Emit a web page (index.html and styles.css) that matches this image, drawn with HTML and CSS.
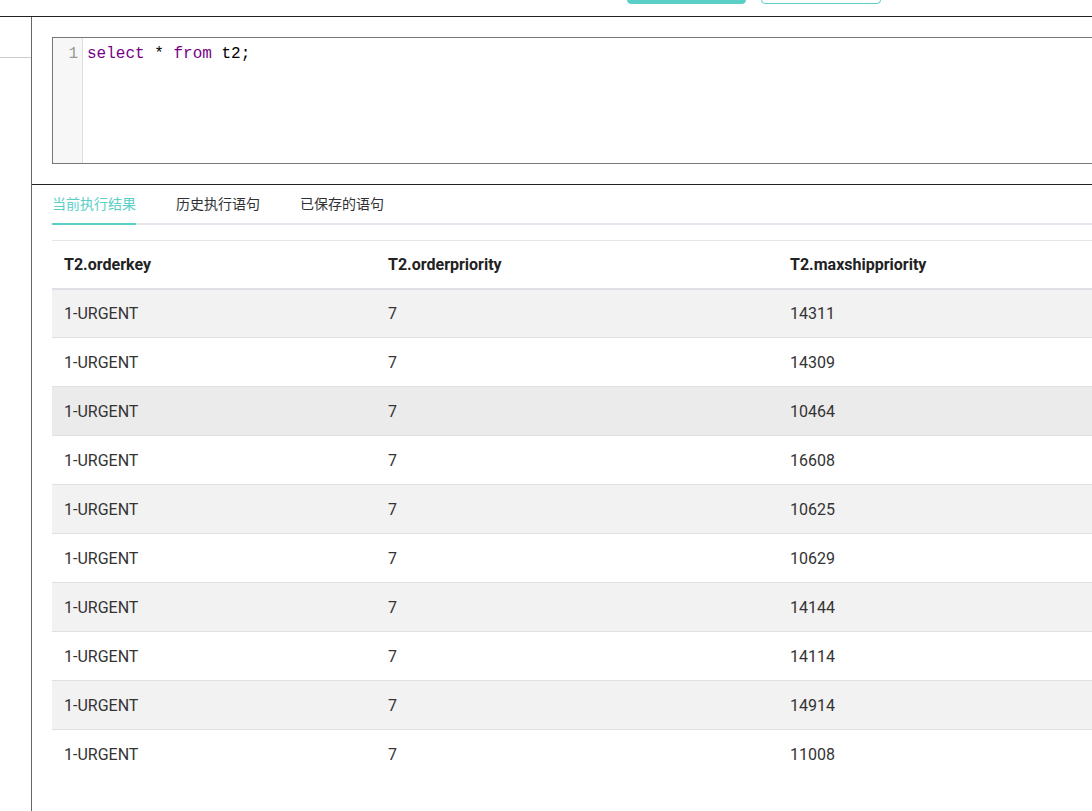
FILE: index.html
```html
<!DOCTYPE html>
<html lang="zh">
<head>
<meta charset="utf-8">
<title>SQL</title>
<link rel="stylesheet" href="styles.css">
</head>
<body>
<div class="topbar">
  <div class="btn btn-primary"></div>
  <div class="btn btn-plain"></div>
</div>
<div class="layout">
  <aside class="sidebar">
    <div class="side-item"></div>
  </aside>
  <main class="main">
    <div class="editor-wrap">
      <div class="editor">
        <div class="gutter"><span class="lineno">1</span></div>
        <div class="code"><span class="kw">select</span> * <span class="kw">from</span> t2;</div>
      </div>
    </div>
    <section class="results">
      <div class="tabs">
        <div class="tab active">当前执行结果</div>
        <div class="tab">历史执行语句</div>
        <div class="tab">已保存的语句</div>
      </div>
      <table class="grid">
        <colgroup><col class="c1"><col class="c2"><col class="c3"></colgroup>
        <thead>
          <tr><th>T2.orderkey</th><th>T2.orderpriority</th><th>T2.maxshippriority</th></tr>
        </thead>
        <tbody>
          <tr class="odd"><td>1-URGENT</td><td>7</td><td>14311</td></tr>
          <tr><td>1-URGENT</td><td>7</td><td>14309</td></tr>
          <tr class="odd hover"><td>1-URGENT</td><td>7</td><td>10464</td></tr>
          <tr><td>1-URGENT</td><td>7</td><td>16608</td></tr>
          <tr class="odd"><td>1-URGENT</td><td>7</td><td>10625</td></tr>
          <tr><td>1-URGENT</td><td>7</td><td>10629</td></tr>
          <tr class="odd"><td>1-URGENT</td><td>7</td><td>14144</td></tr>
          <tr><td>1-URGENT</td><td>7</td><td>14114</td></tr>
          <tr class="odd"><td>1-URGENT</td><td>7</td><td>14914</td></tr>
          <tr><td>1-URGENT</td><td>7</td><td>11008</td></tr>
        </tbody>
      </table>
    </section>
  </main>
</div>
</body>
</html>
```

FILE: styles.css
```css
* { box-sizing: border-box; }
html, body {
  margin: 0;
  padding: 0;
  background: #fff;
  overflow: hidden;
  font-family: Roboto, "Noto Sans CJK SC", sans-serif;
  color: #333;
}
.topbar {
  height: 17px;
  border-bottom: 1px solid #222;
  display: flex;
  align-items: flex-end;
  padding-left: 627px;
  gap: 15px;
}
.btn {
  width: 119px;
  height: 32px;
  margin-bottom: 12px;
  border-radius: 4px;
}
.btn-primary { background: #5acfc5; border: 1px solid #5acfc5; }
.btn-plain { background: #fff; border: 1px solid #5acfc5; width: 120px; }
.layout {
  display: flex;
  height: 794px;
}
.sidebar {
  width: 32px;
  flex: none;
  border-right: 1px solid #666;
}
.side-item {
  height: 41px;
  border-bottom: 1px solid #ccc;
}
.main {
  flex: 1;
  min-width: 0;
  overflow: hidden;
}
.editor-wrap {
  padding: 20px 0 20px 20px;
}
.editor {
  display: flex;
  height: 127px;
  width: 1100px;
  border: 1px solid #777;
  background: #fff;
}
.gutter {
  width: 30px;
  flex: none;
  background: #f7f7f7;
  border-right: 1px solid #ddd;
  text-align: right;
  padding: 7px 4px 0 0;
  font-family: "Liberation Mono", monospace;
  font-size: 16px;
  line-height: 19px;
}
.lineno { color: #999; }
.code {
  padding: 7px 0 0 4px;
  font-family: "Liberation Mono", monospace;
  font-size: 16px;
  line-height: 19px;
  color: #000;
  white-space: pre;
}
.kw { color: #708; }
.results {
  border-top: 1px solid #222;
  padding-left: 20px;
}
.tabs {
  display: flex;
  gap: 40px;
  height: 40px;
  border-bottom: 2px solid #e4e7ed;
  margin-bottom: 15px;
  width: 1100px;
}
.tab {
  font-family: "Noto Sans CJK SC", sans-serif;
  font-size: 14px;
  line-height: 37px;
  padding: 0;
  color: #303133;
  margin-bottom: -2px;
  border-bottom: 2px solid transparent;
}
.tab.active {
  color: #5acfc5;
  border-bottom-color: #5acfc5;
}
.grid {
  width: 1160px;
  border-collapse: collapse;
  border-top: 1px solid #e6e6e6;
  font-size: 16px;
}
.c1 { width: 324px; }
.c2 { width: 402px; }
.grid th {
  text-align: left;
  font-weight: 700;
  color: #222;
  height: 48px;
  padding: 0 12px;
  border-bottom: 2px solid #dfe0e6;
}
.grid td {
  height: 49px;
  padding: 0 12px;
  border-bottom: 1px solid #dfe0e6;
  color: #333;
}
.grid tr.odd td { background: #f2f2f2; }
.grid tr.hover td { background: #ebebeb; }
.grid tbody tr:last-child td { border-bottom: none; }
```
